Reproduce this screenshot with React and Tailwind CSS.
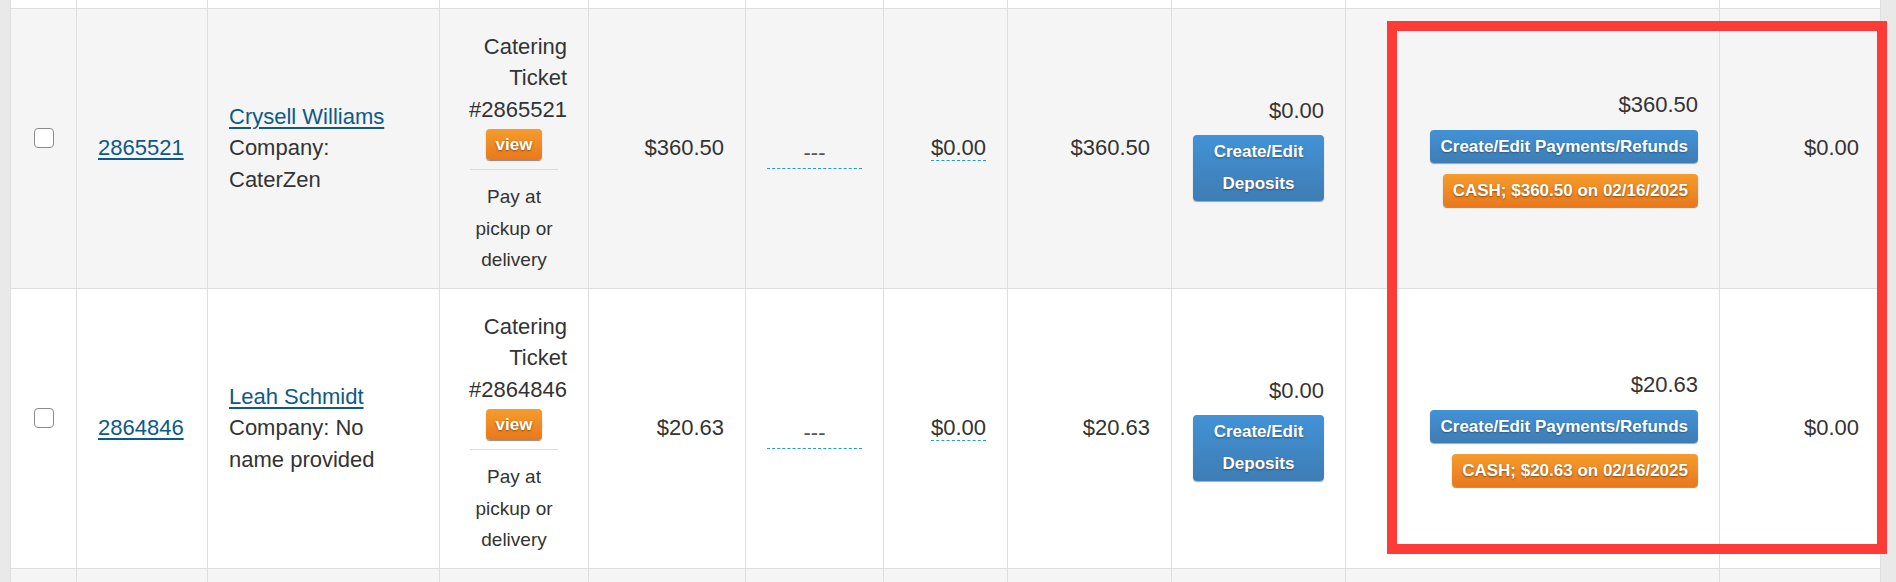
const rows = [
  {
    id: "2865521",
    name: "Crysell Williams",
    company: "Company: CaterZen",
    total: "$360.50",
    paid: "$360.50",
    cash: "CASH; $360.50 on 02/16/2025",
    bg: "bg-[#f5f5f5]",
  },
  {
    id: "2864846",
    name: "Leah Schmidt",
    company: "Company: No name provided",
    total: "$20.63",
    paid: "$20.63",
    cash: "CASH; $20.63 on 02/16/2025",
    bg: "bg-white",
  },
];

const cell = "border border-[#dedede] px-[21px] align-middle";
const edge = "border-x border-[#dedede] p-0";

const blueBtn =
  "rounded-[4px] bg-linear-to-b from-[#4292d6] to-[#3e7db4] text-white font-bold text-[17px] shadow-[0_1px_1px_rgba(0,0,0,0.35)] [text-shadow:0_1px_2px_rgba(0,0,0,0.35)]";
const orangeBtn =
  "rounded-[4px] bg-linear-to-b from-[#f59c2c] to-[#e9781d] text-white font-bold text-[17px] shadow-[0_1px_1px_rgba(0,0,0,0.45)] [text-shadow:0_1px_2px_rgba(0,0,0,0.45)]";

function Row({ r }) {
  return (
    <tr className={r.bg}>
      <td className={`${cell} pb-[22px] text-center`}>
        <span className="inline-block h-[20px] w-[20px] rounded-[4px] border-[1.5px] border-[#8a8a8a] bg-white align-middle" />
      </td>
      <td className={cell}>
        <a href="#" className="text-[#0d5a88] underline underline-offset-[3px]">
          {r.id}
        </a>
      </td>
      <td className={cell}>
        <a href="#" className="text-[#0d5a88] underline underline-offset-[3px]">
          {r.name}
        </a>
        <div>{r.company}</div>
      </td>
      <td className={`${cell} pt-[22px] pb-[12px]`}>
        <div className="text-right">
          Catering
          <br />
          Ticket
          <br />#{r.id}
        </div>
        <div className="mt-[2px] text-center">
          <span className={`${orangeBtn} inline-block px-[10px] leading-[31px]`}>view</span>
        </div>
        <div className="mx-[9px] mt-[9px] border-t border-[#dcdcdc]" />
        <div className="mt-[11px] text-center text-[19px]">
          Pay at
          <br />
          pickup or
          <br />
          delivery
        </div>
      </td>
      <td className={`${cell} text-right`}>{r.total}</td>
      <td className={`${cell} text-center`}>
        <div className="mt-[10px] border-b border-dashed border-[#1f9be0] text-[#555]">---</div>
      </td>
      <td className={`${cell} text-right`}>
        <span className="border-b border-dashed border-[#1f9be0]">$0.00</span>
      </td>
      <td className={`${cell} text-right`}>{r.total}</td>
      <td className={`${cell} text-right`}>
        <div>$0.00</div>
        <div className={`${blueBtn} mt-[8px] py-px text-center leading-[32px]`}>
          Create/Edit Deposits
        </div>
      </td>
      <td className={`${cell} text-right`}>
        <div>{r.paid}</div>
        <div className="mt-[9px]">
          <span className={`${blueBtn} inline-block px-[10px] leading-[33px]`}>
            Create/Edit Payments/Refunds
          </span>
        </div>
        <div className="mt-[10px]">
          <span className={`${orangeBtn} inline-block px-[10px] leading-[33px]`}>{r.cash}</span>
        </div>
      </td>
      <td className={`${cell} text-right`}>$0.00</td>
    </tr>
  );
}

function EdgeRow({ className }) {
  return (
    <tr className={className}>
      {Array.from({ length: 11 }).map((_, i) => (
        <td key={i} className={edge} />
      ))}
    </tr>
  );
}

export default function App() {
  return (
    <div className="relative h-[582px] overflow-hidden bg-[#e9e9e9] pl-[10px] font-['Liberation_Sans',Arial,sans-serif] text-[22px] leading-[31.5px] text-[#333]">
      <table className="w-[1870px] table-fixed border-collapse">
        <colgroup>
          <col className="w-[66px]" />
          <col className="w-[131px]" />
          <col className="w-[232px]" />
          <col className="w-[149px]" />
          <col className="w-[157px]" />
          <col className="w-[138px]" />
          <col className="w-[124px]" />
          <col className="w-[164px]" />
          <col className="w-[174px]" />
          <col className="w-[374px]" />
          <col className="w-[161px]" />
        </colgroup>
        <tbody>
          <EdgeRow className="h-[8px] bg-white" />
          {rows.map((r) => (
            <Row key={r.id} r={r} />
          ))}
          <EdgeRow className="h-[20px] bg-[#f5f5f5]" />
        </tbody>
      </table>

      {/* highlight around payments column */}
      <div className="pointer-events-none absolute left-[1387px] top-[21px] h-[533px] w-[500px] border-[10px] border-[#ff3b37]" />
    </div>
  );
}
